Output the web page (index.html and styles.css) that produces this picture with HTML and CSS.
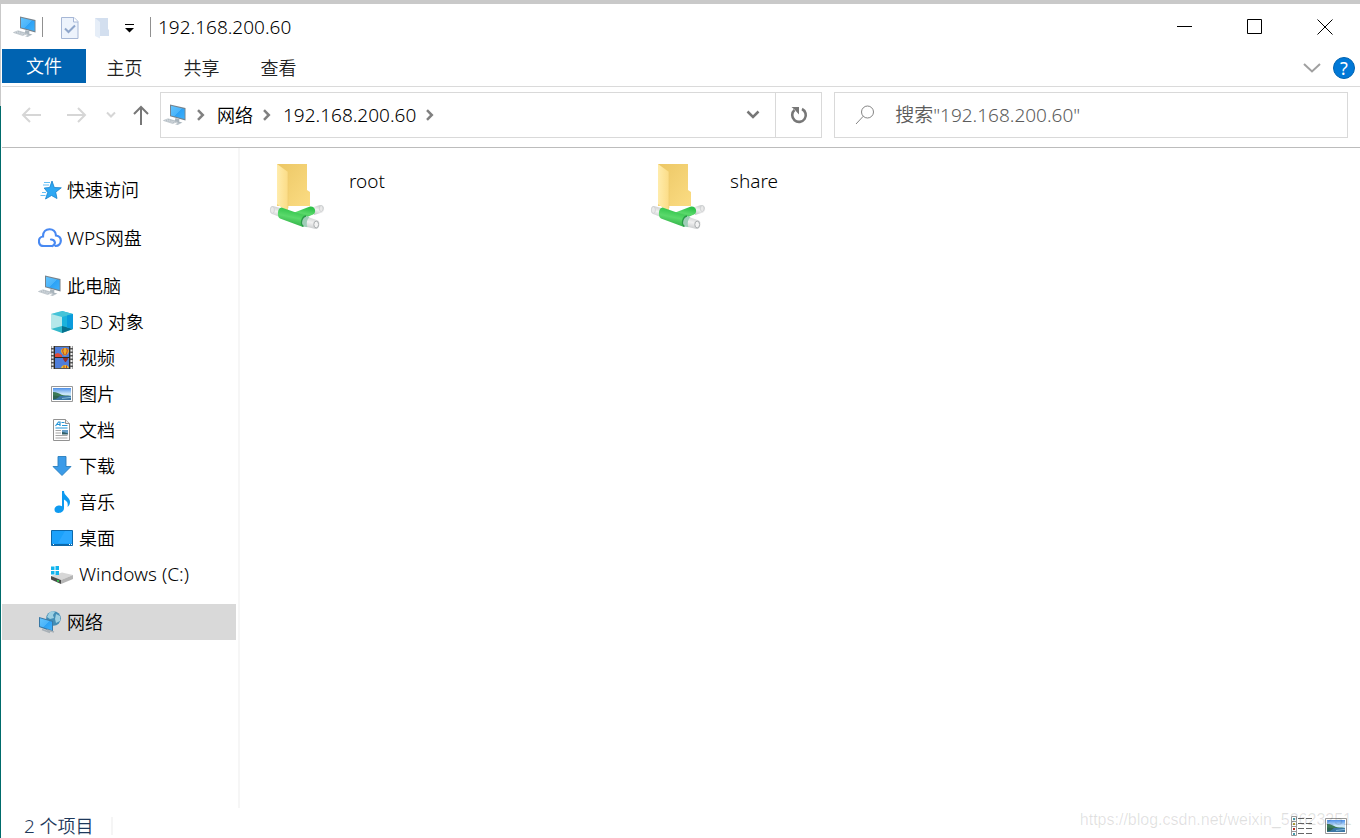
FILE: index.html
```
<!DOCTYPE html>
<html lang="zh-CN">
<head>
    <meta charset="UTF-8">
    <meta name="viewport" content="width=device-width, initial-scale=1.0">
    <title>192.168.200.60</title>
    <link rel="stylesheet" href="styles.css">
</head>
<body>
    <!-- Shared icons -->
    <svg class="defs" aria-hidden="true">
        <defs>
            <linearGradient id="screen" x1="0" y1="0" x2="1" y2="1">
                <stop offset="0" stop-color="#62c3fd"/>
                <stop offset="0.5" stop-color="#4ab4fa"/>
                <stop offset="0.52" stop-color="#2da2f5"/>
                <stop offset="1" stop-color="#3fb1fb"/>
            </linearGradient>
            <linearGradient id="sky" x1="0" y1="0" x2="0" y2="1">
                <stop offset="0" stop-color="#4d8fe8"/>
                <stop offset="0.5" stop-color="#cfe9fa"/>
                <stop offset="1" stop-color="#8cc4e8"/>
            </linearGradient>
            <linearGradient id="flap" x1="0" y1="0" x2="1" y2="0">
                <stop offset="0" stop-color="#ffecac"/>
                <stop offset="1" stop-color="#fbdc86"/>
            </linearGradient>
            <linearGradient id="folder-back" x1="0" y1="0" x2="1" y2="1">
                <stop offset="0" stop-color="#ecc765"/>
                <stop offset="1" stop-color="#fbdc83"/>
            </linearGradient>
            <linearGradient id="pipe" x1="0.3" y1="0" x2="0" y2="1">
                <stop offset="0" stop-color="#2fc24a"/>
                <stop offset="0.4" stop-color="#5ad96b"/>
                <stop offset="1" stop-color="#1c9d35"/>
            </linearGradient>
            <linearGradient id="tube" x1="0.3" y1="0" x2="0" y2="1">
                <stop offset="0" stop-color="#cfd1d2"/>
                <stop offset="0.4" stop-color="#f1f1f1"/>
                <stop offset="1" stop-color="#bcbfc1"/>
            </linearGradient>
        </defs>
        <symbol id="pc" viewBox="0 0 24 24">
            <path d="M7 1.500l15.500 3.500v12.500L7 13.200z" fill="#75828c"/>
            <path d="M8 2.800l13.600 3.100v10.200L8 12.500z" fill="url(#screen)"/>
            <path d="M12.500 15l4 1.300-.4 2.200 3.400 1.200-2.500.9-5.500-1.800z" fill="#a9b4bc"/>
            <path d="M.5 17.500l4.500-1.700 9.500 2.800-4.800 1.900z" fill="#d7dde2" stroke="#aab3ba" stroke-width=".6"/>
            <path d="M3 17.400l8 2.200M5 16.600l8 2.200" stroke="#9ba6ae" stroke-width=".6" stroke-dasharray="1.500 .7"/>
            <path d="M12 21.200l3.300-1.400 2.400.8-3 1.400z" fill="#b7c0c7"/>
        </symbol>
        <symbol id="picture" viewBox="0 0 22 16">
            <path d="M.5.5h21v15H.5z" fill="#fff" stroke="#989898"/>
            <path d="M2 2h18v12H2z" fill="url(#sky)"/>
            <path d="M2 6c4 0 6 1.500 8.500 2.700 2.500.8 5 .5 9.500 1.300H2z" fill="#3c7a56"/>
            <path d="M2 10h18v4H2z" fill="#3c77a5"/>
            <path d="M2 9.500l7 .8-4 2.700-3 .5z" fill="#2f6552"/>
            <path d="M11 12.500l9-1.200" stroke="#81b9d8"/>
        </symbol>
        <symbol id="crumb" viewBox="0 0 10 12">
            <path d="M2 1.200L6.800 6 2 10.800" fill="none" stroke="#808080" stroke-width="2.500"/>
        </symbol>
        <symbol id="shared-folder" viewBox="0 0 56 68">
            <path d="M8 1h30v26l3 2v14H8z" fill="url(#folder-back)"/>
            <path d="M8 1l11 8v38l-2 1-9-7z" fill="url(#flap)"/>
            <path d="M19 9v36" stroke="#ecc970" stroke-width=".6"/>
            <path d="M43 44.500l8-2.500c4.500-.5 5.500 6 2 7.500L45 52z" fill="url(#tube)"/>
            <ellipse cx="52.200" cy="45.600" rx="1.800" ry="3" fill="#e9e9e9" stroke="#c3c6c8" stroke-width=".6"/>
            <path d="M24 50l17-6.500c5-1 7 6 3 8l-14 6z" fill="url(#pipe)"/>
            <path d="M4 43l9 2.500-2 8.500-8-3c-3.500-1.500-2.500-8.500 1-8z" fill="url(#tube)"/>
            <ellipse cx="3.400" cy="47" rx="2" ry="3.300" fill="#eaeaea" stroke="#c6c9cb" stroke-width=".6"/>
            <path d="M12.500 44.500L37 53l-3 11-23-8.500c-3.500-2-2.500-11 1.500-11z" fill="url(#pipe)"/>
            <path d="M36 53l13 4.500c3 1.500 1.500 9-2.500 8.500L34 63z" fill="url(#tube)"/>
            <path d="M37 53l3.500 1.200c-2.500 2-3.500 6-2 10L34.500 63.500c-3.500-2.500-1.500-10 2.500-10.500z" fill="#9fcdb8"/>
            <path d="M37 53c-4 .5-6.500 8-2.500 10.500" fill="none" stroke="#289a47" stroke-width="1.300"/>
            <ellipse cx="47.200" cy="61.500" rx="2.400" ry="3.400" fill="#f3f3f3" stroke="#a9adaf"/>
        </symbol>
    </svg>

    <div class="window">
        <header class="titlebar">
            <svg class="icon"><use href="#pc"/></svg>
            <span class="divider"></span>
            <div class="quick">
                <button type="button" aria-label="属性">
                    <svg width="18" height="22" viewBox="0 0 18 22">
                        <path d="M.5.500H13L17 4.500V21.500H.5z" fill="#edf3fc" stroke="#a6b7d6"/>
                        <path d="M12.500.5v4.500H17" fill="#fff" stroke="#a6b7d6"/>
                        <path d="M4 11.500l3.500 3.500 6.500-6.500" fill="none" stroke="#8fa6cb" stroke-width="2"/>
                    </svg>
                </button>
                <button type="button" aria-label="新建文件夹">
                    <svg width="18" height="22" viewBox="0 0 18 22">
                        <path d="M2 1h13v11l1 1v6H2z" fill="#d3dfef"/>
                        <path d="M2 1l5 4v16.500L2 19z" fill="#e6eef8"/>
                    </svg>
                </button>
                <button type="button" aria-label="自定义快速访问工具栏">
                    <svg width="10" height="10" viewBox="0 0 10 10">
                        <path d="M0 1.500h9" stroke="#000"/>
                        <path d="M0 5h9L4.500 9.500z"/>
                    </svg>
                </button>
            </div>
            <span class="divider"></span>
            <h1>192.168.200.60</h1>
            <div class="controls">
                <button type="button" aria-label="最小化"><svg width="16" height="16" viewBox="0 0 16 16"><path d="M0 7.500h15"/></svg></button>
                <button type="button" aria-label="最大化"><svg width="16" height="16" viewBox="0 0 16 16"><path d="M.5.500h14v14H.5z"/></svg></button>
                <button type="button" aria-label="关闭"><svg width="16" height="16" viewBox="0 0 16 16"><path d="M.5.500l15 15M15.500.5l-15 15"/></svg></button>
            </div>
        </header>

        <nav class="tabs" aria-label="功能区">
            <button type="button" class="file">文件</button>
            <button type="button">主页</button>
            <button type="button">共享</button>
            <button type="button">查看</button>
            <div class="tabs-end">
                <button type="button" aria-label="展开功能区">
                    <svg width="18" height="12" viewBox="0 0 18 12"><path d="M1 2l8 7.500L17 2" fill="none" stroke="#a0a0a0" stroke-width="2"/></svg>
                </button>
                <button type="button" class="help">?</button>
            </div>
        </nav>

        <div class="navbar">
            <div class="history">
                <button type="button" aria-label="后退" disabled>
                    <svg width="20" height="16" viewBox="0 0 20 16"><path d="M20 8H2M9 1L2 8l7 7"/></svg>
                </button>
                <button type="button" aria-label="前进" disabled>
                    <svg width="20" height="16" viewBox="0 0 20 16"><path d="M0 8h18M11 1l7 7-7 7"/></svg>
                </button>
                <button type="button" class="recent" aria-label="最近位置" disabled>
                    <svg width="10" height="8" viewBox="0 0 10 8"><path d="M1 1.500l4 4 4-4"/></svg>
                </button>
                <button type="button" class="up" aria-label="向上">
                    <svg width="16" height="20" viewBox="0 0 16 20"><path d="M8 20V2M1 9l7-7 7 7"/></svg>
                </button>
            </div>
            <div class="address">
                <svg class="icon"><use href="#pc"/></svg>
                <svg class="crumb"><use href="#crumb"/></svg>
                <a href="#network">网络</a>
                <svg class="crumb"><use href="#crumb"/></svg>
                <a class="latin" href="#host">192.168.200.60</a>
                <svg class="crumb"><use href="#crumb"/></svg>
                <button type="button" class="drop" aria-label="以前的位置">
                    <svg width="14" height="10" viewBox="0 0 14 10"><path d="M1.500 1.500L7 7l5.500-5.500" fill="none" stroke="#777" stroke-width="2.500"/></svg>
                </button>
                <button type="button" class="refresh" aria-label="刷新">
                    <svg width="18" height="18" viewBox="0 0 18 18">
                        <path d="M12 3a6.800 6.800 0 1 1-7.500 1" fill="none" stroke="#777" stroke-width="2.600"/>
                        <path d="M1.500 1H9v7.500L6.700 6 5 4z" fill="#777"/>
                    </svg>
                </button>
            </div>
            <label class="search">
                <svg width="20" height="20" viewBox="0 0 20 20"><path d="M8.300 11.200L1 19" /><circle cx="12.500" cy="7" r="6"/></svg>
                <input class="latin" type="search" aria-label="搜索" placeholder='搜索"192.168.200.60"'>
            </label>
        </div>

        <main class="main">
            <nav class="sidebar" aria-label="导航窗格">
                <a href="#quick">
                    <svg class="icon" viewBox="0 0 24 24">
                        <path d="M14 3l2.300 6.500 7 .3-5.600 4.400 1.300 6.300-5.500-3-6 3.500 2.200-6.500-3.500-4.500 5.500-.5z" fill="#2ea8f3" stroke="#1580cb" stroke-width=".8"/>
                        <path d="M6 4.500h6M5 7h6M4 14.500h4M2.500 17.500h5" stroke="#65bff5"/>
                    </svg>
                    快速访问
                </a>
                <a href="#wps">
                    <svg class="icon" viewBox="0 0 24 24">
                        <path d="M14.500 20H6C-.7 20-.5 11 5 10.500 4.800 1 18 1 18 9.500c6.800 1 6.200 10.300-.5 10.500M14.500 20c4-2 2.500-6.500-1.500-6.500" fill="none" stroke="#4889f2" stroke-width="2.200" stroke-linecap="round"/>
                    </svg>
                    <span><span class="latin">WPS</span>网盘</span>
                </a>
                <div class="group">
                    <a href="#pc-root"><svg class="icon"><use href="#pc"/></svg>此电脑</a>
                    <a class="child" href="#objects">
                        <svg class="icon" viewBox="0 0 24 24">
                            <path d="M1 4l11-3v19l-11-1z" fill="#b5e8ea"/>
                            <path d="M12 1l11 3v15l-11 1z" fill="#1bb2dc"/>
                            <path d="M1 4l11-3 11 3-11 3z" fill="#45c3d8"/>
                            <path d="M1 19l11-3 11 3-11 4z" fill="#34b9cb"/>
                            <path d="M12 16l11 3-11 4z" fill="#07718e"/>
                            <path d="M17 5.600L23 4v15l-6-1.600z" fill="#0a9bdc"/>
                        </svg>
                        <span><span class="latin">3D</span> 对象</span>
                    </a>
                    <a class="child" href="#videos">
                        <svg class="icon" viewBox="0 0 24 24">
                            <path d="M1 0h22v23H1z" fill="#555"/>
                            <path d="M2.500 0v23M21.500 0v23" stroke="#eee" stroke-width="2" stroke-dasharray="2 1.500"/>
                            <path d="M5 1h14v21H5z" fill="#4f7edb"/>
                            <path d="M5 8l3-1 4 2v2H5z" fill="#e44a35"/>
                            <path d="M11 5c0-4 8-4 8 0 0 2-2 3-3 4.500h-2c-1-1.500-3-2.500-3-4.500z" fill="#edae27"/>
                            <path d="M13.500 2.500c-1.500 2-.5 4 .8 6.500M16.500 2.500c1.500 2 .5 4-.8 6.500" fill="none" stroke="#c23a2a"/>
                            <path d="M4 11.500h16" stroke="#2b2b2b"/>
                            <path d="M13 12h5c0 2-1.500 2.500-2 4h-1c-.5-1.500-2-2-2-4z" fill="#9a2d2a"/>
                            <path d="M11 22c1-4 7-4 8 0z" fill="#e9c42e"/>
                            <path d="M14 19.500v2.500M16.500 19.500v2.500" stroke="#c23a2a"/>
                            <path d="M4.500 0v23M19.500 0v23" stroke="#2b2b2b"/>
                        </svg>
                        视频
                    </a>
                    <a class="child" href="#pictures">
                        <svg class="icon" viewBox="0 0 24 24"><use href="#picture" x="1" y="4" width="22" height="16"/></svg>
                        图片
                    </a>
                    <a class="child" href="#documents">
                        <svg class="icon" viewBox="0 0 24 24">
                            <path d="M3.500 1.500h12l4 4v17h-16z" fill="#fff" stroke="#929292"/>
                            <path d="M15.500 1.500v4h4" fill="#eee" stroke="#929292"/>
                            <path d="M5.500 8l3-4H10v4M7 6.500h3M11.500 4.500h3M12 7.500h5.500M5.500 10h12" fill="none" stroke="#2495d8" stroke-width="1.200"/>
                            <path d="M5.500 12.500H11M5.500 15H11M5.500 17.500h12M5.500 20h12" stroke="#a7a7a7"/>
                            <path d="M12 12h6v4h-6z" fill="#679fc9"/>
                            <path d="M12 14l3 .5 3 1v1h-6z" fill="#315f68"/>
                        </svg>
                        文档
                    </a>
                    <a class="child" href="#downloads">
                        <svg class="icon" viewBox="0 0 24 24"><path d="M8 2.500h8v10h5l-9 9-9-9h5z" fill="#3b9be8" stroke="#287ebd" stroke-width=".9"/></svg>
                        下载
                    </a>
                    <a class="child" href="#music">
                        <svg class="icon" viewBox="0 0 24 24"><path d="M12 1h2c0 5 6 6 6 11 0 2-1 4-2.500 5 1-5-1-6-3.500-7.500V18c0 6-9.500 6.500-9.500 1.700 0-3.500 4.500-5 7.500-3.500z" fill="#0e9af0"/></svg>
                        音乐
                    </a>
                    <a class="child" href="#desktop">
                        <svg class="icon" viewBox="0 0 24 24">
                            <path d="M1.500 4.500h21v15h-21z" fill="#1ba1fb" stroke="#0d68aa"/>
                            <path d="M15 5h7v12H8z" fill="#2ba8ff"/>
                            <path d="M2 18.500h20" stroke="#0d68aa"/>
                            <path d="M3 18.500h1M19 18.500h1M21 18.500h1" stroke="#fff"/>
                        </svg>
                        桌面
                    </a>
                    <a class="child latin" href="#drive-c">
                        <svg class="icon" viewBox="0 0 24 24">
                            <path d="M1 14l11-3.500 11 2.500-12 5z" fill="#d7d7d7"/>
                            <path d="M1 14l10 4v4L1 17.500z" fill="#4b4b4b"/>
                            <path d="M11 18l12-5v4l-12 5z" fill="#b5b5b5"/>
                            <path d="M7 18.500l2 .8" stroke="#33d64e" stroke-width="1.500"/>
                            <path d="M1 4.500h3.500V8H1zM5.500 4H9v4H5.500zM1 9h3.500v3.500H1zM5.500 9H9v4H5.500z" fill="#12b4ee"/>
                        </svg>
                        Windows (C:)
                    </a>
                </div>
                <a class="selected" href="#network">
                    <svg class="icon" viewBox="0 0 24 24">
                        <circle cx="15.500" cy="8.500" r="7.300" fill="#428db5"/>
                        <path d="M11 3c2-2 5-2 6-1l-2 3 1 3-4 1-3-2zM18 4l4 2v5l-4 2-1-4z" fill="#9dd0e2"/>
                        <path d="M1 7l14 4v11L1 17z" fill="#3978a5"/>
                        <path d="M2 8.300l12 3.400v8.600L2 16.200z" fill="url(#screen)"/>
                        <path d="M4 19.500l8 3M9 20l7 2" stroke="#a9b1b7" stroke-width="1.500"/>
                    </svg>
                    网络
                </a>
            </nav>
            <section class="files" aria-label="共享文件夹">
                <a class="latin" href="#root"><svg class="folder"><use href="#shared-folder"/></svg>root</a>
                <a class="latin" href="#share"><svg class="folder"><use href="#shared-folder"/></svg>share</a>
            </section>
        </main>

        <footer class="status">
            <span class="count"><span class="latin">2</span> 个项目</span>
            <div class="views">
                <button type="button" aria-label="详细信息">
                    <svg width="22" height="20" viewBox="0 0 22 20">
                        <path d="M.5.500h5v19h-5zM.5 5.500h5M.5 10.500h5M.5 15.500h5" fill="#fff" stroke="#999"/>
                        <path d="M2 3h2" stroke="#49a" stroke-width="2"/>
                        <path d="M2 8h2" stroke="#b9a63a" stroke-width="2"/>
                        <path d="M2 13h2" stroke="#b32c22" stroke-width="2"/>
                        <path d="M2 18h2" stroke="#49a" stroke-width="2"/>
                        <path d="M7 2.500h6M15 2.500h6M7 7.500h6M15 7.500h6M7 12.500h6M15 12.500h6M7 17.500h6M15 17.500h6" stroke="#666"/>
                    </svg>
                </button>
                <button type="button" aria-label="大缩略图">
                    <svg width="22" height="16"><use href="#picture"/></svg>
                </button>
            </div>
        </footer>
    </div>
    <div class="watermark">https://blog.csdn.net/weixin_52623251</div>
</body>
</html>
```

FILE: styles.css
```
/* General Styles */
* {
    box-sizing: border-box;
}

body {
    margin: 0;
    min-height: 100vh;
    padding: 4px 0 0 1px;
    display: flex;
    position: relative;
    overflow: hidden;
    background: linear-gradient(#c9c9c9 106px, #006b6b 106px);
    font: 350 18px/24px "Noto Sans", "Noto Sans CJK SC", sans-serif;
    color: #000;
}

a {
    color: inherit;
    text-decoration: none;
}

button {
    margin: 0;
    padding: 0;
    border: 0;
    background: none;
    font: inherit;
    color: inherit;
    display: flex;
    align-items: center;
    justify-content: center;
}

svg {
    flex: none;
    display: block;
}

.defs {
    position: absolute;
    width: 0;
    height: 0;
}

.icon {
    width: 24px;
    height: 24px;
}

.latin {
    font-size: 19px;
}

.window {
    flex: 1;
    min-width: 0;
    display: flex;
    flex-direction: column;
    background: #fff;
    padding-left: 1px;
}

/* Title bar */
.titlebar {
    display: flex;
    align-items: center;
    height: 45px;
    padding-left: 11px;
}

.titlebar .divider {
    width: 1px;
    height: 20px;
    margin-left: 5px;
    background: #909090;
}

.quick {
    display: flex;
    align-items: center;
    gap: 14px;
    padding: 2px 10px 0 18px;
}

h1 {
    margin: 0;
    padding-left: 7px;
    font-size: 19px;
    font-weight: inherit;
}

.controls {
    display: flex;
    margin-left: auto;
    align-self: stretch;
}

.controls button {
    width: 70px;
}

.controls path {
    fill: none;
    stroke: #000;
}

/* Ribbon tabs */
.tabs {
    display: flex;
    height: 38px;
    border-bottom: 1px solid #dadada;
    color: #222;
}

.tabs > button {
    width: 77px;
}

.tabs .file {
    width: 84px;
    height: 34px;
    background: #0063b1;
    color: #fff;
}

.tabs-end {
    display: flex;
    align-items: center;
    gap: 12px;
    margin-left: auto;
    padding-right: 5px;
}

.help {
    width: 22px;
    height: 22px;
    border: 1px solid #0063b1;
    border-radius: 50%;
    background: #0078d7;
    color: #fff;
    font-size: 18px;
    font-weight: 400;
}

/* Navigation bar */
.navbar {
    display: flex;
    padding: 5px 12px 9px 6px;
    border-bottom: 1px solid #bcbcbc;
}

.history {
    display: flex;
}

.history button {
    width: 46px;
}

.history .recent {
    width: 22px;
}

.history .up {
    width: 38px;
}

.history path {
    fill: none;
    stroke: #d6d6d6;
    stroke-width: 2;
}

.history .up path {
    stroke: #777;
}

.address,
.search {
    display: flex;
    align-items: center;
    height: 46px;
    border: 1px solid #d9d9d9;
}

.address {
    flex: 9 1 0;
    min-width: 0;
    padding-left: 2px;
}

.crumb {
    width: 10px;
    height: 12px;
    margin: 0 11px 0 9px;
}

.address .drop {
    width: 44px;
    height: 44px;
    margin-left: auto;
}

.address .refresh {
    width: 46px;
    height: 44px;
    border-left: 1px solid #d9d9d9;
}

.search {
    flex: 7 1 0;
    min-width: 0;
    margin-left: 12px;
}

.search svg {
    margin: 0 20px;
}

.search path,
.search circle {
    fill: none;
    stroke: #858585;
}

.search input {
    flex: 1;
    min-width: 0;
    padding: 0;
    border: 0;
    outline: 0;
    background: none;
    font-family: inherit;
    font-weight: inherit;
}

.search input::placeholder {
    color: #5c5c5c;
    opacity: 1;
}

/* Navigation pane and files */
.main {
    flex: 1;
    display: flex;
}

.sidebar {
    width: 238px;
    display: flex;
    flex-direction: column;
    gap: 12px;
    padding: 24px 2px 0 0;
    border-right: 2px solid #f6f6f6;
}

.sidebar a {
    display: flex;
    align-items: center;
    gap: 5px;
    height: 36px;
    padding-left: 36px;
}

.sidebar .child {
    padding-left: 48px;
}

.sidebar .selected {
    background: #d9d9d9;
}

.files {
    flex: 1;
    display: grid;
    grid-template-columns: repeat(auto-fill, 381px);
    align-content: start;
    padding: 15px 0 0 29px;
}

.files a {
    display: flex;
    gap: 24px;
    line-height: 36px;
}

.folder {
    width: 56px;
    height: 68px;
}

/* Status bar */
.status {
    display: flex;
    align-items: center;
    height: 30px;
    padding: 6px 13px 0 22px;
    color: #1e395b;
}

.count {
    padding-right: 17px;
    border-right: 2px solid #f5f5f5;
    line-height: 18px;
}

.views {
    display: flex;
    gap: 12px;
    margin-left: auto;
}

.watermark {
    position: absolute;
    right: 8px;
    bottom: 8px;
    font: 16px/20px "Liberation Sans", sans-serif;
    color: rgba(0, 0, 0, 0.12);
    pointer-events: none;
}
```
